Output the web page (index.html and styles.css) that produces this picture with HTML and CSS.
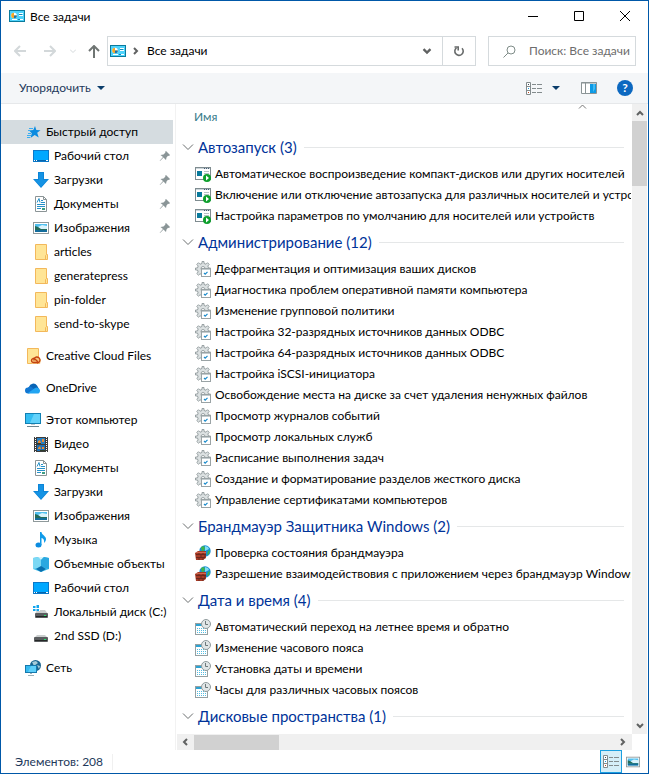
FILE: index.html
```html
<!DOCTYPE html>
<html lang="ru">
<head>
    <meta charset="UTF-8">
    <meta name="viewport" content="width=device-width, initial-scale=1.0">
    <title>Все задачи</title>
    <link rel="stylesheet" href="styles.css">
</head>
<body>
<!-- Shared icons -->
<svg class="sprite" aria-hidden="true">
    <symbol id="i-panel" viewBox="0 0 16 16">
        <rect x="0" y="2" width="16" height="12" fill="#0a7a9c"/>
        <rect x="1" y="3" width="14" height="10" fill="#4fd3fb"/>
        <circle cx="5" cy="7.5" r="2.8" fill="#fff"/>
        <path d="M5 7.500V4.700A2.800 2.800 0 1 0 7.800 7.500z" fill="#f5a623"/>
        <path d="M5 7.500h2.800A2.800 2.800 0 0 1 5 10.300z" fill="#1374b8"/>
        <path d="M10 5.500h4M10 7.500h4M3 11.500h5M10 11.500h4" stroke="#fff"/>
        <path d="M10 6.500h3M9 11.500h2" stroke="#1687b5"/>
    </symbol>
    <symbol id="i-star" viewBox="0 0 16 16">
        <path d="M10 2l1.300 4 4.200.200-3.300 2.600 1.500 4.700-4-2.400L5.500 14l1.300-4.700L4 6.500l4.300-.500z" fill="#0b8be0"/>
        <path d="M4 4.500h4M3 6.500h3M3 9.500h3M2 11.500h4M2 13.500h3" stroke="#39aef2"/>
    </symbol>
    <symbol id="i-desktop" viewBox="0 0 16 16">
        <rect x=".5" y="2.500" width="15" height="11" fill="#00a8ff" stroke="#0b78c8"/>
        <path d="M1 12.500h14" stroke="#0565ad"/>
        <path d="M1 12.500h1M3 12.500h1M13 12.500h2" stroke="#fff"/>
    </symbol>
    <symbol id="i-down" viewBox="0 0 16 16">
        <path d="M5 0h6v7h5l-8 9-8-9h5z" fill="#0c85d8"/>
        <path d="M6 1h4v7h4l-6 7-6-7h4z" fill="#1593e4"/>
    </symbol>
    <symbol id="i-doc" viewBox="0 0 16 16">
        <path d="M2.500.5h8l3 3v12h-11z" fill="#fff" stroke="#8b9496"/>
        <path d="M10.500.5v3h3" fill="none" stroke="#8b9496"/>
        <path d="M4 6.500l2-4 1 4M8 4.500h2M8 6.500h4M4 8.500h8M4 10.500h8M4 12.500h4" fill="none" stroke="#2791c9"/>
        <path d="M9 13h3" stroke="#3f9d80" stroke-width="2"/>
    </symbol>
    <symbol id="i-pic" viewBox="0 0 16 16">
        <rect x=".5" y="2.500" width="15" height="11" fill="#fff" stroke="#8f999b"/>
        <rect x="2" y="4" width="12" height="8" fill="#51c0ef"/>
        <path d="M5 7l4-2 5 1v3H6z" fill="#d9f3fc"/>
        <path d="M2 6l3 1 3 2h6v1H2z" fill="#246b59"/>
        <path d="M2 10h12v2H2z" fill="#136c9b"/>
    </symbol>
    <symbol id="i-folder" viewBox="0 0 16 16">
        <path d="M2.500.5h11v10h1v5h-12z" fill="#ffe596" stroke="#f3b85b"/>
        <path d="M12.500 15.500v-4l1-1" fill="none" stroke="#f3b85b"/>
    </symbol>
    <symbol id="i-cloudfiles" viewBox="0 0 16 16">
        <path d="M2.500.5h11v15h-11z" fill="#ffe596" stroke="#f3b85b"/>
        <path d="M8 9h6l2 3-1 4H7l-1-3z" fill="#f5c27a"/>
        <path d="M12 14.500H8.500a2 2 0 1 1 1.400-3.400l3 2.700M9 12.500a3 3 0 1 1 3 2.500" fill="none" stroke="#c4420f" stroke-width="1.300"/>
    </symbol>
    <symbol id="i-onedrive" viewBox="0 0 16 16">
        <path d="M4 7a4.500 4.500 0 0 1 8-1.500L14 9l-7 4-5-3z" fill="#0864b5"/>
        <path d="M3 7.500a3 3 0 0 1 4 0l6 4-10 2A3 3 0 0 1 3 7.500z" fill="#1177d2"/>
        <path d="M3 13l7-5a3 3 0 0 1 3 0 3 3 0 0 1 .500 5.500H3z" fill="#22a5f2"/>
    </symbol>
    <symbol id="i-pc" viewBox="0 0 16 16">
        <rect x=".5" y="1.500" width="15" height="10" fill="#33bdf2" stroke="#1280b3"/>
        <path d="M9 2h6v9H5z" fill="#63d2fa"/>
        <path d="M6 12.500h4" stroke="#c0cbd0"/>
        <path d="M2 14.500h12" stroke="#6f8690"/>
    </symbol>
    <symbol id="i-video" viewBox="0 0 16 16">
        <rect x="1" y="1" width="14" height="15" fill="#3d3d3d"/>
        <path d="M2.500 1v15M13.500 1v15" stroke="#fff" stroke-dasharray="1 1"/>
        <rect x="4" y="2" width="8" height="6" fill="#247fc4"/>
        <rect x="4" y="9" width="8" height="6" fill="#1c70b5"/>
        <path d="M5 5l2-1 1 3H5zM9 3h2v3H9z" fill="#e78b35"/>
        <path d="M5 12l2-2 1 3H5zM9 11h2v2H9z" fill="#e78b35"/>
        <path d="M4 7h4v1H4zM7 14h5v1H7z" fill="#2f3c2b"/>
    </symbol>
    <symbol id="i-music" viewBox="0 0 16 16">
        <ellipse cx="5.500" cy="13" rx="3" ry="2.500" fill="#0c8ce0"/>
        <path d="M7 0h1.500c0 3 5 4 4.500 7.500-.2 1.500-1 2.500-2 3.500.5-3-.5-4.500-2.500-5V13H7z" fill="#109be9"/>
    </symbol>
    <symbol id="i-cube" viewBox="0 0 16 16">
        <path d="M0 2l5-1h6l5 1v11l-8 3-8-3z" fill="#42c0ec"/>
        <path d="M0 2l5-1 3 3v7l-8 2z" fill="#7bd8f4"/>
        <path d="M5 1h6L8 4z" fill="#d3f3fb"/>
        <path d="M16 2l-5-1-3 3v7l8 2z" fill="#2ba8e0"/>
        <path d="M3 13l5-3 5 3-5 3z" fill="#0a6fae"/>
    </symbol>
    <symbol id="i-drive" viewBox="0 0 16 16">
        <path d="M4 7h8l3 3H1z" fill="#c9cdcd"/>
        <rect x="1" y="9" width="14" height="5" rx="1" fill="#5a5d5f"/>
        <path d="M2 12.500h12" stroke="#242627"/>
        <rect x="11" y="11" width="2" height="1" fill="#27e36a"/>
    </symbol>
    <symbol id="i-windrive" viewBox="0 0 16 16">
        <path d="M4 6h8l3 4H2z" fill="#c9cdcd"/>
        <rect x="2" y="9" width="13" height="5" rx="1" fill="#5a5d5f"/>
        <path d="M3 12.500h11" stroke="#242627"/>
        <rect x="11" y="11" width="2" height="1" fill="#27e36a"/>
        <path d="M0 1h7v6H0z" fill="#fff"/>
        <path d="M0 2h2.500v2H0zM3.500 1H6v3H3.500zM0 5h2.500v2H0zM3.500 5H6v2H3.500z" fill="#12a5ed"/>
    </symbol>
    <symbol id="i-net" viewBox="0 0 16 16">
        <circle cx="10.500" cy="5.500" r="5.500" fill="#1b6590"/>
        <path d="M7 2l4-1 2 2-4 3zM12 5l3 1-1 3z" fill="#a7cbd8"/>
        <rect x=".5" y="5.500" width="11" height="7" fill="#35baf0" stroke="#1679ad"/>
        <path d="M6 6h5v6H3z" fill="#5fcffa"/>
        <path d="M3 15.500h6" stroke="#9db0b8"/>
        <path d="M5 13.500h2" stroke="#9db0b8"/>
    </symbol>
    <symbol id="i-pin" viewBox="0 0 12 12">
        <path d="M7 1l4 4-1 1-1-.3L7.500 7.500 7 10 4.500 7.500 1 11l-.3-.3L4 7 1.500 5l3-.5L6.500 2.500 6 2z" fill="#8a9597"/>
    </symbol>
    <symbol id="i-autoplay" viewBox="0 0 16 16">
        <rect x=".5" y="1.500" width="15" height="12" fill="#fff" stroke="#7f8c90"/>
        <path d="M1 2.500h14" stroke="#ccd5da"/>
        <path d="M9 2.500h1M11 2.500h1M13 2.500h1" stroke="#465b73"/>
        <rect x="2" y="5" width="5" height="5" fill="#087a9c"/>
        <path d="M9 5.500h5M9 7.500h5" stroke="#b8c2c6"/>
        <circle cx="12" cy="12" r="4" fill="#0d9f2c"/>
        <path d="M11 9.500v5l3-2.500z" fill="#fff"/>
    </symbol>
    <symbol id="i-admin" viewBox="0 0 16 16">
        <path d="M7 .5h2v2l2 .7 1.500-1.500 1.700 1.700L12.800 5l.7 2h2v2h-2l-.7 2 1.400 1.500-1.700 1.700L11 12.800l-2 .7v2H7v-2l-2-.7-1.500 1.400-1.700-1.700L3.200 11l-.7-2h-2V7h2l.7-2-1.400-1.600 1.700-1.700L5 3.200l2-.7z" fill="#dce1e2" stroke="#98a1a3"/>
        <circle cx="8" cy="7.500" r="2" fill="#fff" stroke="#9aa3a5"/>
        <rect x="6.500" y="7.500" width="9" height="8" fill="#fff" stroke="#9aa3a5"/>
        <path d="M7 8.500h8" stroke="#c3cbce"/>
        <path d="M9 12l1.200 1.200 2.300-2.300" fill="none" stroke="#1b8bcb" stroke-width="1.200"/>
    </symbol>
    <symbol id="i-firewall" viewBox="0 0 16 16">
        <circle cx="10" cy="6" r="5.700" fill="#168fd2"/>
        <path d="M6 2l3-1 1 3-3 3zM13 6l2-1-1 4-2 1z" fill="#3fb54a"/>
        <path d="M10 1l3 1 1 2-4 2z" fill="#7fdcf5"/>
        <path d="M0 8l3-2h8v7l-3 2H1z" fill="#a63a26"/>
        <path d="M1 9.500h10M1 12.500h9M4 7v2M8 7v2M6 10v2M10 10v2M4 13v2M8 13v2" stroke="#6c281d"/>
        <path d="M1 7.500h10" stroke="#cf6850"/>
    </symbol>
    <symbol id="i-date" viewBox="0 0 16 16">
        <rect x=".5" y="4.500" width="12" height="11" fill="#fff" stroke="#95a0a2"/>
        <path d="M1 6h11" stroke="#2ba3d3" stroke-width="2"/>
        <path d="M2 9.500h9M2 11.500h9M2 13.500h9" stroke="#54bce0" stroke-dasharray="1 1"/>
        <circle cx="11" cy="5" r="4.500" fill="#e1e6e7" stroke="#909b9d"/>
        <path d="M10.500 2v3.500H13" fill="none" stroke="#6c787a"/>
    </symbol>
    <symbol id="i-details" viewBox="0 0 16 13">
        <path d="M.5.5h4v12h-4zM.5 4.500h4M.5 8.500h4" fill="#fff" stroke="#838b8d"/>
        <path d="M6 2.500h4M11 2.500h5M6 6.500h4M11 6.500h5M6 10.500h4M11 10.500h5" stroke="#838b8d"/>
        <path d="M2 2.500h1" stroke="#3b4a5a"/>
        <path d="M2 6.500h1" stroke="#1698e0"/>
        <path d="M2 10.500h1" stroke="#c0461d"/>
    </symbol>
    <symbol id="i-chevron" viewBox="0 0 12 8">
        <path d="M1 1.500l5 5 5-5" fill="none" stroke="#6b6f70"/>
    </symbol>
    <symbol id="i-arrow" viewBox="0 0 8 6">
        <path d="M1 1l3 3 3-3" fill="none" stroke="#606262" stroke-width="2"/>
    </symbol>
</svg>

<div class="window">
    <header class="titlebar">
        <svg class="icon"><use href="#i-panel"/></svg>
        <h1 class="title">Все задачи</h1>
        <div class="controls">
            <button type="button" aria-label="Свернуть"><svg viewBox="0 0 10 10"><path d="M0 5.500h10"/></svg></button>
            <button type="button" aria-label="Развернуть"><svg viewBox="0 0 10 10"><path d="M.5.5h9v9h-9z"/></svg></button>
            <button type="button" aria-label="Закрыть"><svg viewBox="0 0 10 10"><path d="M0 0l10 10M10 0L0 10"/></svg></button>
        </div>
    </header>

    <div class="navbar">
        <div class="history">
            <button type="button" aria-label="Назад" disabled><svg width="12" height="12" viewBox="0 0 12 12"><path d="M12 6H1M6 1L1 6l5 5"/></svg></button>
            <button type="button" aria-label="Вперед" disabled><svg width="12" height="12" viewBox="0 0 12 12"><path d="M0 6h11M6 1l5 5-5 5"/></svg></button>
            <button type="button" class="recent" aria-label="Последние расположения" disabled><svg width="6" height="4" viewBox="0 0 6 4"><path d="M0 .5l3 3 3-3"/></svg></button>
            <button type="button" class="up" aria-label="Вверх"><svg width="12" height="13" viewBox="0 0 12 13"><path d="M6 13V1M1 6l5-5 5 5"/></svg></button>
        </div>
        <div class="address">
            <svg class="icon"><use href="#i-panel"/></svg>
            <svg class="crumb-arrow"><use href="#i-arrow"/></svg>
            <button type="button" class="crumb">Все задачи</button>
            <button type="button" class="drop" aria-label="Предыдущие расположения"><svg width="10" height="7" viewBox="0 0 8 6"><use href="#i-arrow"/></svg></button>
            <button type="button" class="refresh" aria-label="Обновить">
                <svg width="12" height="12" viewBox="0 0 12 12"><path d="M9 3.200A4.200 4.200 0 1 1 3.500 2.800" fill="none" stroke="#686b6b" stroke-width="1.600"/><path d="M1.500 2h3.700v3.500" fill="none" stroke="#686b6b" stroke-width="1.600"/></svg>
            </button>
        </div>
        <label class="search">
            <svg width="13" height="13" viewBox="0 0 13 13"><circle cx="8" cy="5" r="4" fill="none" stroke="#7f8c88"/><path d="M5 8l-4.500 4.500" stroke="#7f8c88"/></svg>
            <input type="text" placeholder="Поиск: Все задачи" aria-label="Поиск">
        </label>
    </div>

    <div class="toolbar">
        <button type="button" class="organize">Упорядочить <span class="caret"></span></button>
        <button type="button" class="view" aria-label="Представление"><svg class="details"><use href="#i-details"/></svg><span class="caret"></span></button>
        <button type="button" class="preview" aria-label="Область просмотра">
            <svg width="16" height="12" viewBox="0 0 16 12"><path d="M.5.5h15v11H.5z" fill="#fff" stroke="#8b9496"/><path d="M0 1h16M4.500 1v11" stroke="#8b9496"/><path d="M9 2h6v9H9z" fill="#0d9ae5"/><path d="M12 2h2v5l-2 3z" fill="#44bbf3"/></svg>
        </button>
        <button type="button" class="help" aria-label="Справка">?</button>
    </div>

    <div class="body">
        <nav class="sidebar">
            <ul class="tree">
                <li><a class="node selected" href="#"><svg class="icon"><use href="#i-star"/></svg>Быстрый доступ</a></li>
                <li><a class="node child" href="#"><svg class="icon"><use href="#i-desktop"/></svg>Рабочий стол<svg class="pin"><use href="#i-pin"/></svg></a></li>
                <li><a class="node child" href="#"><svg class="icon"><use href="#i-down"/></svg>Загрузки<svg class="pin"><use href="#i-pin"/></svg></a></li>
                <li><a class="node child" href="#"><svg class="icon"><use href="#i-doc"/></svg>Документы<svg class="pin"><use href="#i-pin"/></svg></a></li>
                <li><a class="node child" href="#"><svg class="icon"><use href="#i-pic"/></svg>Изображения<svg class="pin"><use href="#i-pin"/></svg></a></li>
                <li><a class="node child" href="#"><svg class="icon"><use href="#i-folder"/></svg>articles</a></li>
                <li><a class="node child" href="#"><svg class="icon"><use href="#i-folder"/></svg>generatepress</a></li>
                <li><a class="node child" href="#"><svg class="icon"><use href="#i-folder"/></svg>pin-folder</a></li>
                <li><a class="node child" href="#"><svg class="icon"><use href="#i-folder"/></svg>send-to-skype</a></li>
            </ul>
            <ul class="tree">
                <li><a class="node" href="#"><svg class="icon"><use href="#i-cloudfiles"/></svg>Creative Cloud Files</a></li>
            </ul>
            <ul class="tree">
                <li><a class="node" href="#"><svg class="icon"><use href="#i-onedrive"/></svg>OneDrive</a></li>
            </ul>
            <ul class="tree">
                <li><a class="node" href="#"><svg class="icon"><use href="#i-pc"/></svg>Этот компьютер</a></li>
                <li><a class="node child" href="#"><svg class="icon"><use href="#i-video"/></svg>Видео</a></li>
                <li><a class="node child" href="#"><svg class="icon"><use href="#i-doc"/></svg>Документы</a></li>
                <li><a class="node child" href="#"><svg class="icon"><use href="#i-down"/></svg>Загрузки</a></li>
                <li><a class="node child" href="#"><svg class="icon"><use href="#i-pic"/></svg>Изображения</a></li>
                <li><a class="node child" href="#"><svg class="icon"><use href="#i-music"/></svg>Музыка</a></li>
                <li><a class="node child" href="#"><svg class="icon"><use href="#i-cube"/></svg>Объемные объекты</a></li>
                <li><a class="node child" href="#"><svg class="icon"><use href="#i-desktop"/></svg>Рабочий стол</a></li>
                <li><a class="node child" href="#"><svg class="icon"><use href="#i-windrive"/></svg>Локальный диск (C:)</a></li>
                <li><a class="node child" href="#"><svg class="icon"><use href="#i-drive"/></svg>2nd SSD (D:)</a></li>
            </ul>
            <ul class="tree">
                <li><a class="node" href="#"><svg class="icon"><use href="#i-net"/></svg>Сеть</a></li>
            </ul>
        </nav>

        <main class="content">
            <div class="list">
                <div class="column-head">
                    <button type="button">Имя</button>
                    <svg class="sort" viewBox="0 0 8 5"><path d="M.5 4.500L4 1l3.500 3.500" fill="none" stroke="#777"/></svg>
                </div>
                <section>
                    <h2 class="group"><svg class="chevron"><use href="#i-chevron"/></svg>Автозапуск (3)</h2>
                    <ul class="tasks">
                        <li><a href="#"><svg class="icon"><use href="#i-autoplay"/></svg>Автоматическое воспроизведение компакт-дисков или других носителей</a></li>
                        <li><a href="#"><svg class="icon"><use href="#i-autoplay"/></svg>Включение или отключение автозапуска для различных носителей и устройств</a></li>
                        <li><a href="#"><svg class="icon"><use href="#i-autoplay"/></svg>Настройка параметров по умолчанию для носителей или устройств</a></li>
                    </ul>
                </section>
                <section>
                    <h2 class="group"><svg class="chevron"><use href="#i-chevron"/></svg>Администрирование (12)</h2>
                    <ul class="tasks">
                        <li><a href="#"><svg class="icon"><use href="#i-admin"/></svg>Дефрагментация и оптимизация ваших дисков</a></li>
                        <li><a href="#"><svg class="icon"><use href="#i-admin"/></svg>Диагностика проблем оперативной памяти компьютера</a></li>
                        <li><a href="#"><svg class="icon"><use href="#i-admin"/></svg>Изменение групповой политики</a></li>
                        <li><a href="#"><svg class="icon"><use href="#i-admin"/></svg>Настройка 32-разрядных источников данных ODBC</a></li>
                        <li><a href="#"><svg class="icon"><use href="#i-admin"/></svg>Настройка 64-разрядных источников данных ODBC</a></li>
                        <li><a href="#"><svg class="icon"><use href="#i-admin"/></svg>Настройка iSCSI-инициатора</a></li>
                        <li><a href="#"><svg class="icon"><use href="#i-admin"/></svg>Освобождение места на диске за счет удаления ненужных файлов</a></li>
                        <li><a href="#"><svg class="icon"><use href="#i-admin"/></svg>Просмотр журналов событий</a></li>
                        <li><a href="#"><svg class="icon"><use href="#i-admin"/></svg>Просмотр локальных служб</a></li>
                        <li><a href="#"><svg class="icon"><use href="#i-admin"/></svg>Расписание выполнения задач</a></li>
                        <li><a href="#"><svg class="icon"><use href="#i-admin"/></svg>Создание и форматирование разделов жесткого диска</a></li>
                        <li><a href="#"><svg class="icon"><use href="#i-admin"/></svg>Управление сертификатами компьютеров</a></li>
                    </ul>
                </section>
                <section>
                    <h2 class="group"><svg class="chevron"><use href="#i-chevron"/></svg>Брандмауэр Защитника Windows (2)</h2>
                    <ul class="tasks">
                        <li><a href="#"><svg class="icon"><use href="#i-firewall"/></svg>Проверка состояния брандмауэра</a></li>
                        <li><a href="#"><svg class="icon"><use href="#i-firewall"/></svg>Разрешение взаимодействовия с приложением через брандмауэр Windows</a></li>
                    </ul>
                </section>
                <section>
                    <h2 class="group"><svg class="chevron"><use href="#i-chevron"/></svg>Дата и время (4)</h2>
                    <ul class="tasks">
                        <li><a href="#"><svg class="icon"><use href="#i-date"/></svg>Автоматический переход на летнее время и обратно</a></li>
                        <li><a href="#"><svg class="icon"><use href="#i-date"/></svg>Изменение часового пояса</a></li>
                        <li><a href="#"><svg class="icon"><use href="#i-date"/></svg>Установка даты и времени</a></li>
                        <li><a href="#"><svg class="icon"><use href="#i-date"/></svg>Часы для различных часовых поясов</a></li>
                    </ul>
                </section>
                <section>
                    <h2 class="group"><svg class="chevron"><use href="#i-chevron"/></svg>Дисковые пространства (1)</h2>
                </section>
            </div>
            <div class="scroll-y">
                <svg class="arrow up-arrow"><use href="#i-arrow"/></svg>
                <div class="thumb"></div>
                <svg class="arrow"><use href="#i-arrow"/></svg>
            </div>
            <div class="scroll-x">
                <svg class="arrow left-arrow"><use href="#i-arrow"/></svg>
                <div class="thumb"></div>
                <svg class="arrow right-arrow"><use href="#i-arrow"/></svg>
            </div>
        </main>
    </div>

    <footer class="status">
        <span class="count">Элементов: 208</span>
        <button type="button" class="mode active" aria-label="Таблица"><svg class="details"><use href="#i-details"/></svg></button>
        <button type="button" class="mode" aria-label="Крупные значки"><svg class="thumbs"><use href="#i-pic"/></svg></button>
    </footer>
</div>
</body>
</html>
```

FILE: styles.css
```css
* { box-sizing: border-box; }
body { margin: 0; font-family: Lato, "Noto Sans", sans-serif; font-size: 12px; line-height: 16px; color: #000; background: #fff; }
button { font: inherit; color: inherit; background: none; border: 0; padding: 0; }
ul { list-style: none; margin: 0; padding: 0; }
a { color: inherit; text-decoration: none; }
svg { display: block; flex: none; }
.sprite { position: absolute; width: 0; height: 0; }
.icon { width: 16px; height: 16px; }

.window { display: flex; flex-direction: column; height: 100vh; border: 1px solid #0058a8; overflow: hidden; }

/* Title bar */
.titlebar { display: flex; align-items: center; height: 29px; padding-left: 8px; flex: none; }
.title { margin: 0 0 0 5px; font-size: 12px; font-weight: normal; flex: 1; padding-top: 2px; }
.controls { display: flex; }
.controls button { display: flex; align-items: center; justify-content: center; width: 46px; height: 29px; }
.controls svg { width: 10px; height: 10px; fill: none; stroke: #000; }

/* Address bar */
.navbar { display: flex; height: 43px; padding: 6px 12px 7px 13px; flex: none; }
.history { display: flex; align-items: center; width: 93px; }
.history button { margin-right: 18px; }
.history svg { fill: none; stroke: #d3d8da; stroke-width: 2; }
.history .recent { margin: 0 12px 0 -4px; }
.history .recent svg { stroke-width: 1; }
.history .up { margin-right: 0; }
.history .up svg { stroke: #6f7573; }
.address { display: flex; align-items: center; flex: 1; border: 1px solid #d5dadd; padding-left: 2px; }
.crumb-arrow { width: 8px; height: 6px; margin-left: 6px; transform: rotate(-90deg); }
.crumb { flex: 1; margin-left: 7px; text-align: left; }
.drop { display: flex; align-items: center; justify-content: center; width: 30px; }
.refresh { display: flex; align-items: center; justify-content: center; align-self: stretch; width: 33px; border-left: 1px solid #d5dadd; }
.search { display: flex; align-items: center; width: 148px; margin-left: 12px; padding-left: 14px; border: 1px solid #d5dadd; }
.search input { flex: 1; min-width: 0; margin-left: 13px; padding: 0; border: 0; outline: 0; font: inherit; background: none; }
.search input::placeholder { color: #6d6d6d; opacity: 1; }

/* Command bar */
.toolbar { display: flex; align-items: center; height: 31px; padding: 0 15px 0 18px; background: #f4f6f8; border-bottom: 1px solid #e6e8ea; color: #1e395b; flex: none; }
.organize { display: flex; align-items: center; margin-right: auto; }
.caret { width: 0; margin-left: 6px; border: 4px solid transparent; border-top-color: #0a3d6b; border-bottom: 0; }
.view { display: flex; align-items: center; margin-right: 21px; }
.view .caret { margin-left: 10px; }
.details { width: 16px; height: 13px; }
.preview { margin-right: 20px; }
.help { width: 16px; height: 16px; border-radius: 50%; background: #0c68c0; color: #fff; font-weight: bold; line-height: 16px; }

/* Navigation pane */
.body { display: flex; flex: 1; min-height: 0; }
.sidebar { width: 175px; padding-top: 16px; border-right: 1px solid #f2f2f2; flex: none; }
.tree { margin-bottom: 8px; }
.node { display: flex; align-items: center; gap: 5px; height: 24px; margin-right: 2px; padding-left: 24px; white-space: nowrap; }
.node.child { padding-left: 32px; }
.node.selected { background: #d5dce0; }
.pin { width: 12px; height: 12px; margin: 0 2px 0 auto; }

/* File list */
.content { display: grid; grid-template: minmax(0, 1fr) 16px / minmax(0, 1fr) 16px; flex: 1; min-width: 0; }
.list { overflow: hidden; margin-right: 1px; }
.column-head { display: flex; justify-content: space-between; align-items: center; height: 27px; padding: 0 44px 2px 18px; color: #3b7d8c; }
.sort { width: 9px; height: 5px; align-self: flex-start; }
.group { display: flex; align-items: center; height: 32px; margin: 0; padding: 0 7px 0 6px; color: #003399; font-size: 15px; font-weight: normal; line-height: 20px; white-space: nowrap; }
.group::after { content: ""; flex: 1; height: 1px; margin-left: 7px; background: #e5e7e8; }
.chevron { width: 12px; height: 8px; margin-right: 4px; }
.tasks a { display: flex; align-items: center; gap: 4px; height: 21px; padding-left: 19px; white-space: nowrap; }

/* Scroll bars */
.scroll-y, .scroll-x { display: flex; align-items: center; background: #f0f0f0; }
.scroll-y { flex-direction: column; margin-right: 1px; }
.scroll-x { margin-left: 1px; }
.arrow { width: 8px; height: 6px; margin: 5px; }
.scroll-y .arrow { margin: 6px 0 5px; }
.scroll-x .left-arrow { margin-left: 4px; }
.up-arrow { transform: rotate(180deg); }
.left-arrow { transform: rotate(90deg); }
.right-arrow { transform: rotate(-90deg); }
.thumb { background: #d1d1d1; }
.scroll-y .thumb { width: 15px; height: 65px; margin-bottom: auto; }
.scroll-x .thumb { width: 85px; height: 15px; margin-right: auto; }

/* Status bar */
.status { display: flex; align-items: center; height: 23px; padding-right: 4px; color: #1e395b; flex: none; }
.count { margin-right: auto; margin-left: 14px; padding-right: 9px; border-right: 1px solid #f0f0f0; }
.mode { display: flex; align-items: center; justify-content: center; width: 22px; height: 23px; border: 1px solid transparent; }
.mode.active { background: #d5eef8; border-color: #1ba0e1; }
.thumbs { width: 14px; height: 14px; }
```
